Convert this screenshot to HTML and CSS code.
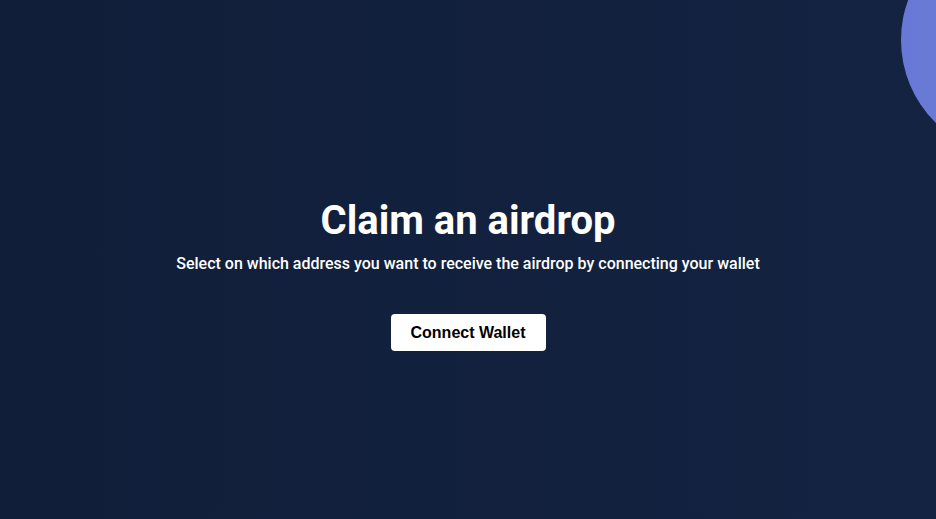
FILE: index.html
```html
<!DOCTYPE html>
<html lang="en">
<head>
<meta charset="utf-8">
<title>Claim an airdrop</title>
<link rel="stylesheet" href="styles.css">
</head>
<body>
<div class="page">
  <div class="blob"></div>
  <main class="hero">
    <h1 class="title">Claim an airdrop</h1>
    <p class="subtitle">Select on which address you want to receive the airdrop by connecting your wallet</p>
    <button class="connect" type="button">Connect Wallet</button>
  </main>
</div>
</body>
</html>
```
FILE: styles.css
```css
html, body {
  margin: 0;
  padding: 0;
  height: 100%;
}
body {
  background: #12203d;
  font-family: Roboto, "Liberation Sans", Arial, sans-serif;
  color: #fff;
  overflow: hidden;
}
.page {
  position: relative;
  height: 100%;
  background: linear-gradient(90deg, #111e3a 0%, #12213e 60%, #132341 100%);
  overflow: hidden;
}
.blob {
  position: absolute;
  left: 901px;
  top: -76px;
  width: 232px;
  height: 232px;
  border-radius: 50%;
  background: linear-gradient(90deg, #6878d6, #7284da);
}
.hero {
  display: flex;
  flex-direction: column;
  align-items: center;
  padding-top: 197px;
}
.title {
  margin: 0;
  font-size: 40px;
  font-weight: 700;
  line-height: 48px;
}
.subtitle {
  margin: 8px 0 0;
  font-size: 16px;
  font-weight: 500;
  line-height: 22px;
}
.connect {
  margin-top: 39px;
  width: 155px;
  height: 37px;
  border: none;
  border-radius: 4px;
  background: #fff;
  color: #000;
  font-family: "Liberation Sans", Arial, sans-serif;
  font-size: 16px;
  font-weight: 700;
  cursor: pointer;
}
```
